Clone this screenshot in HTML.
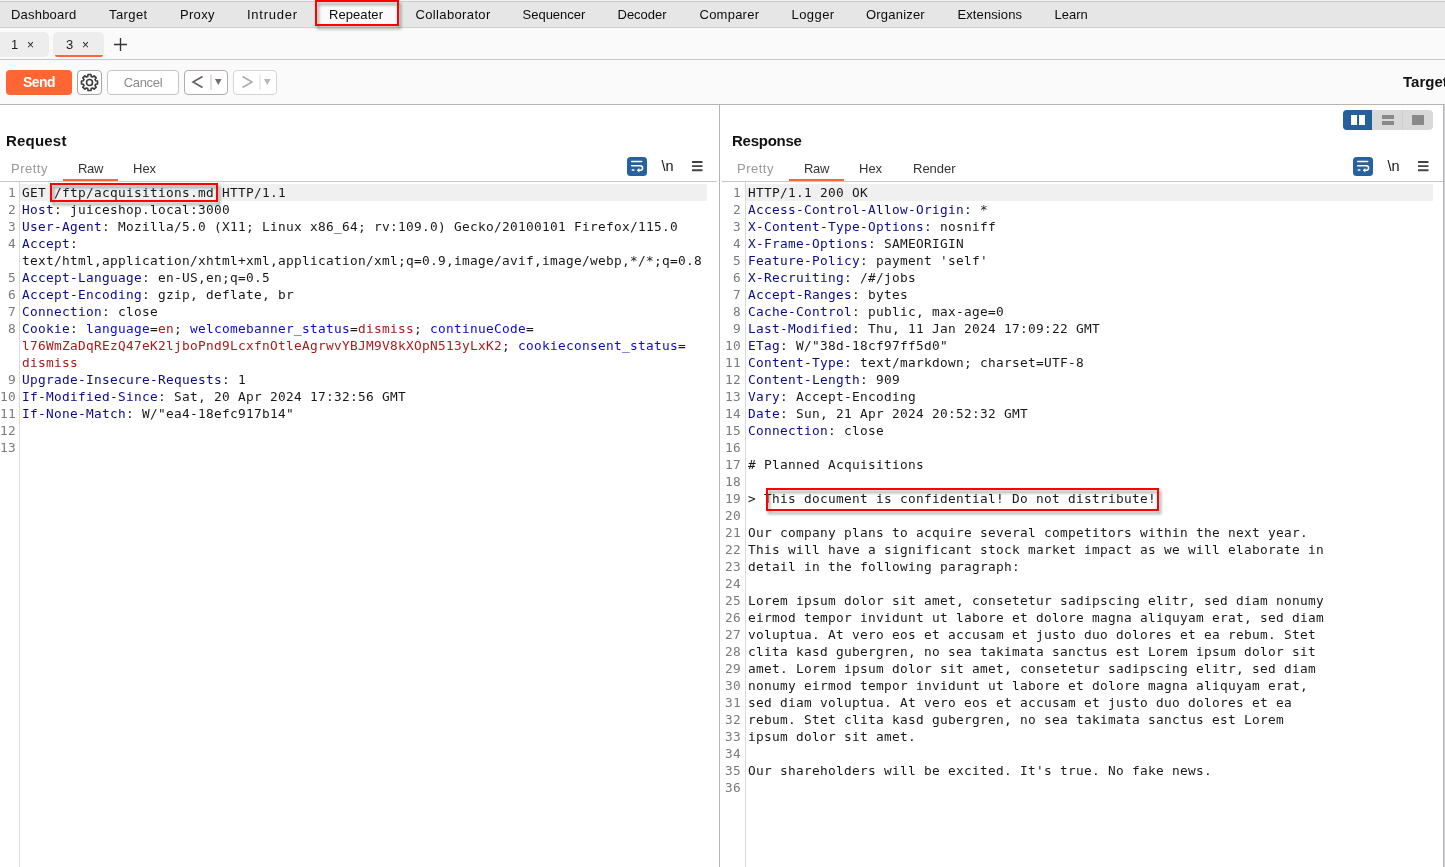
<!DOCTYPE html>
<html lang="en">
<head>
<meta charset="utf-8">
<title>Burp Suite - Repeater</title>
<style>
html,body{margin:0;padding:0;}
body{width:1445px;height:867px;overflow:hidden;background:#fff;position:relative;will-change:transform;font-family:"Liberation Sans","DejaVu Sans",sans-serif;font-size:13px;color:#222;}
.abs{position:absolute;}
#topbar{position:absolute;left:0;top:0;width:1445px;height:25px;background:#e6e6e6;border-top:2px solid #c8cccc;border-bottom:1px solid #cbd0d0;}
#topbar:before{content:"";position:absolute;left:0;top:-2px;width:1445px;height:1px;background:#f2f2f2;}
.nv{position:absolute;top:5px;height:16px;line-height:16px;font-size:13px;color:#0c0c0c;white-space:nowrap;}
#repbg{position:absolute;left:317px;top:0;width:80px;height:22px;background:#fafafa;}
#repbox{position:absolute;left:315px;top:0;width:80px;height:22px;border:2px solid #ff0000;filter:drop-shadow(2px 3px 1.8px rgba(60,80,80,.55));}
#tabrow{position:absolute;left:0;top:28px;width:1445px;height:31px;background:#fafafa;border-bottom:1px solid #c3c9c9;}
.rtab{position:absolute;top:4px;height:25px;background:#ededed;border-radius:5px;}
.rtab span{position:absolute;top:5px;line-height:16px;font-size:13px;color:#222;}
#toolbar{position:absolute;left:0;top:60px;width:1445px;height:44px;background:#fafafa;border-bottom:1px solid #b9b3b3;}
.btn{position:absolute;top:10px;height:23px;border:1px solid #c4c4c4;border-radius:4px;background:#fff;box-sizing:content-box;}
#send{left:6px;width:66px;height:25px;border:none;background:#ff6633;color:#fff;font-weight:bold;font-size:14px;letter-spacing:-0.5px;text-align:center;line-height:25px;}
#cancel{left:107px;width:70px;color:#8a8a8a;text-align:center;line-height:24px;font-size:13px;letter-spacing:-0.35px;}
.panelhead{position:absolute;top:132px;font-weight:bold;font-size:15px;line-height:18px;color:#111;}
.vtab{position:absolute;top:161px;font-size:13px;line-height:16px;color:#333;white-space:nowrap;}
.vtab.dim{color:#999;}
.uline{position:absolute;top:179px;height:2px;background:#ff6633;}
.hline{position:absolute;top:181px;height:1px;background:#c3c9c9;}
.editor{position:absolute;top:184px;font-family:"DejaVu Sans Mono","Liberation Mono",monospace;font-size:12.8px;letter-spacing:0.2955px;line-height:17px;color:#181818;}
.row{position:relative;height:17px;white-space:pre;}
.row .ln{position:absolute;left:0;top:0;text-align:right;color:#7a7a7a;}
.row .tx{position:absolute;top:0;height:17px;}
.row.first .tx{background:#f0f0f0;}
#req .ln{width:16px;} #req .tx{left:20px;padding-left:2px;}
#req .row.first .tx{width:685px;}
#resp .ln{width:21px;} #resp .tx{left:26px;padding-left:2px;}
#resp .row.first .tx{width:685px;}
.h{color:#0c0c86;} .n{color:#0c0ccf;} .v{color:#aa1c1c;}
.gut{position:absolute;top:182px;width:1px;height:685px;background:#d9d9d9;}
.redbox{position:absolute;border:2px solid #ff0000;filter:drop-shadow(2px 3px 1.8px rgba(60,80,80,.55));}
.nl{position:absolute;top:158px;font-size:14.5px;line-height:16px;color:#111;letter-spacing:-0.1px;}
.menu{position:absolute;top:161px;width:10.5px;height:11px;}
.wrapic{position:absolute;top:157px;}
</style>
</head>
<body>
<div id="topbar">
<div id="repbg"></div>
<span class="nv" style="left:11px;letter-spacing:0.2px">Dashboard</span>
<span class="nv" style="left:109px;letter-spacing:0.4px">Target</span>
<span class="nv" style="left:180px;letter-spacing:0.3px">Proxy</span>
<span class="nv" style="left:247px;letter-spacing:0.74px">Intruder</span>
<span class="nv" style="left:329px;letter-spacing:0.07px">Repeater</span>
<span class="nv" style="left:415.5px;letter-spacing:0.36px">Collaborator</span>
<span class="nv" style="left:522.5px;letter-spacing:0px">Sequencer</span>
<span class="nv" style="left:617.5px;letter-spacing:0px">Decoder</span>
<span class="nv" style="left:699.5px;letter-spacing:0.24px">Comparer</span>
<span class="nv" style="left:791.5px;letter-spacing:0.44px">Logger</span>
<span class="nv" style="left:866px;letter-spacing:0.2px">Organizer</span>
<span class="nv" style="left:957.5px;letter-spacing:0.1px">Extensions</span>
<span class="nv" style="left:1054.5px;letter-spacing:0px">Learn</span>
</div>
<div id="tabrow">
<div class="rtab" style="left:-5px;width:54px"><span style="left:16px">1</span><span style="left:32px;font-size:12px">×</span></div>
<div class="rtab" style="left:53px;width:51px"><span style="left:13px">3</span><span style="left:29px;font-size:12px">×</span><i class="abs" style="left:2px;right:1px;bottom:0;height:2px;background:#ff6633;border-radius:0 0 3px 3px"></i></div>
<svg class="abs" style="left:114px;top:10px" width="13" height="13" viewBox="0 0 13 13"><path d="M6.500 0v13M0 6.500h13" stroke="#333" stroke-width="1.350" fill="none"/></svg>
</div>
<div id="toolbar">
<div class="btn" id="send">Send</div>
<div class="btn" style="left:77px;width:23px;border-color:#aaa3a3"><svg class="abs" style="left:2px;top:1.500px" width="19" height="19" viewBox="0 0 24 24" fill="none" stroke="#3c3c3c" stroke-width="2.1" stroke-linejoin="round"><path d="M9.83 4.30 L10.15 1.87 L13.85 1.87 L14.17 4.30 L15.91 5.02 L17.86 3.53 L20.47 6.14 L18.98 8.09 L19.70 9.83 L22.13 10.15 L22.13 13.85 L19.70 14.17 L18.98 15.91 L20.47 17.86 L17.86 20.47 L15.91 18.98 L14.17 19.70 L13.85 22.13 L10.15 22.13 L9.83 19.70 L8.09 18.98 L6.14 20.47 L3.53 17.86 L5.02 15.91 L4.30 14.17 L1.87 13.85 L1.87 10.15 L4.30 9.83 L5.02 8.09 L3.53 6.14 L6.14 3.53 L8.09 5.02Z"/><circle cx="12" cy="12" r="3.800"/></svg></div>
<div class="btn" id="cancel">Cancel</div>
<div class="btn" style="left:184px;width:42px;border-color:#b5aaaa"><svg class="abs" style="left:0;top:0" width="42" height="23" viewBox="0 0 42 23"><path d="M17.500 5.500L8 11 17.500 16.500" stroke="#606060" stroke-width="1.600" fill="none"/><path d="M26 3.500v15.500" stroke="#d6d6d6" stroke-width="1.500"/><path d="M30 8h6.600l-3.300 6z" fill="#6e6e6e"/></svg></div>
<div class="btn" style="left:233px;width:42px;border-color:#d4d4d4"><svg class="abs" style="left:0;top:0" width="42" height="23" viewBox="0 0 42 23"><path d="M8.500 5.500L18 11 8.500 16.500" stroke="#ababab" stroke-width="1.600" fill="none"/><path d="M26 3.500v15.500" stroke="#e6e6e6" stroke-width="1.500"/><path d="M30 8h6.600l-3.300 6z" fill="#b8b8b8"/></svg></div>
<div class="abs" style="left:1403px;top:13px;font-weight:bold;font-size:15px;line-height:18px;color:#111;white-space:nowrap">Target: juiceshop.local</div>
</div>

<div class="abs" style="left:719px;top:105px;width:1px;height:762px;background:#b9b4b4"></div>
<div class="abs" style="left:1443px;top:105px;width:1px;height:762px;background:#b8b3b3"></div>
<div class="abs" style="left:1444px;top:105px;width:1px;height:762px;background:#d2d2d6"></div>

<!-- layout switcher -->
<div class="abs" style="left:1343px;top:110px;width:90px;height:20px;border-radius:4px;background:#d9d9d9;overflow:hidden">
<div class="abs" style="left:0;top:0;width:29px;height:20px;background:#255f9c"></div>
<div class="abs" style="left:8px;top:5px;width:6px;height:10px;background:#fff"></div>
<div class="abs" style="left:16px;top:5px;width:6px;height:10px;background:#fff"></div>
<div class="abs" style="left:59px;top:0;width:1px;height:20px;background:#cfcfcf"></div>
<div class="abs" style="left:39px;top:5px;width:12px;height:4px;background:#898989"></div>
<div class="abs" style="left:39px;top:10.500px;width:12px;height:4.500px;background:#898989"></div>
<div class="abs" style="left:69px;top:5px;width:12px;height:10px;background:#898989"></div>
</div>

<!-- Request panel -->
<div class="panelhead" style="left:6px;letter-spacing:0.2px">Request</div>
<div class="vtab dim" style="left:11px;letter-spacing:0.5px">Pretty</div>
<div class="vtab" style="left:78px;letter-spacing:-0.3px">Raw</div>
<div class="vtab" style="left:133px">Hex</div>
<div class="uline" style="left:63px;width:55px"></div>
<div class="hline" style="left:0;width:717px"></div>
<svg class="wrapic" style="left:627px" width="20" height="19" viewBox="0 0 20 19"><rect x="0" y="0" width="20" height="19" rx="3.500" ry="3.500" fill="#27629f"/><g fill="none" stroke="#fff" stroke-width="1.500" stroke-linecap="round" stroke-linejoin="round"><path d="M4.700 4.500h10"/><path d="M4.700 8.700h8.600a2.300 2.300 0 0 1 0 4.600h-2.300"/><path d="M4.700 13h2.700" stroke-linecap="butt"/></g><path d="M12.400 11l-2.600 2.300 2.600 2.300z" fill="#fff"/></svg>
<div class="nl" style="left:661.500px">\n</div>
<svg class="menu" style="left:692px" viewBox="0 0 10.500 11"><path d="M0 1h10.500M0 5.100h10.500M0 9.200h10.500" stroke="#444" stroke-width="1.900"/></svg>
<div class="gut" style="left:19px"></div>
<div class="editor" id="req" style="left:0;width:719px">
<div class="row first"><span class="ln">1</span><span class="tx">GET /ftp/acquisitions.md HTTP/1.1</span></div>
<div class="row"><span class="ln">2</span><span class="tx"><span class="h">Host</span>: juiceshop.local:3000</span></div>
<div class="row"><span class="ln">3</span><span class="tx"><span class="h">User-Agent</span>: Mozilla/5.0 (X11; Linux x86_64; rv:109.0) Gecko/20100101 Firefox/115.0</span></div>
<div class="row"><span class="ln">4</span><span class="tx"><span class="h">Accept</span>:</span></div>
<div class="row"><span class="ln"></span><span class="tx">text/html,application/xhtml+xml,application/xml;q=0.9,image/avif,image/webp,*/*;q=0.8</span></div>
<div class="row"><span class="ln">5</span><span class="tx"><span class="h">Accept-Language</span>: en-US,en;q=0.5</span></div>
<div class="row"><span class="ln">6</span><span class="tx"><span class="h">Accept-Encoding</span>: gzip, deflate, br</span></div>
<div class="row"><span class="ln">7</span><span class="tx"><span class="h">Connection</span>: close</span></div>
<div class="row"><span class="ln">8</span><span class="tx"><span class="h">Cookie</span>: <span class="n">language</span>=<span class="v">en</span>; <span class="n">welcomebanner_status</span>=<span class="v">dismiss</span>; <span class="n">continueCode</span>=</span></div>
<div class="row"><span class="ln"></span><span class="tx"><span class="v">l76WmZaDqREzQ47eK2ljboPnd9LcxfnOtleAgrwvYBJM9V8kXOpN513yLxK2</span>; <span class="n">cookieconsent_status</span>=</span></div>
<div class="row"><span class="ln"></span><span class="tx"><span class="v">dismiss</span></span></div>
<div class="row"><span class="ln">9</span><span class="tx"><span class="h">Upgrade-Insecure-Requests</span>: 1</span></div>
<div class="row"><span class="ln">10</span><span class="tx"><span class="h">If-Modified-Since</span>: Sat, 20 Apr 2024 17:32:56 GMT</span></div>
<div class="row"><span class="ln">11</span><span class="tx"><span class="h">If-None-Match</span>: W/"ea4-18efc917b14"</span></div>
<div class="row"><span class="ln">12</span><span class="tx"></span></div>
<div class="row"><span class="ln">13</span><span class="tx"></span></div>
</div>
<div class="redbox" style="left:50px;top:183px;width:164px;height:15px"></div>

<!-- Response panel -->
<div class="panelhead" style="left:732px;letter-spacing:-0.25px">Response</div>
<div class="vtab dim" style="left:737px;letter-spacing:0.5px">Pretty</div>
<div class="vtab" style="left:804px;letter-spacing:-0.3px">Raw</div>
<div class="vtab" style="left:859px">Hex</div>
<div class="vtab" style="left:913px">Render</div>
<div class="uline" style="left:789px;width:55px"></div>
<div class="hline" style="left:722px;width:721px"></div>
<svg class="wrapic" style="left:1353px" width="20" height="19" viewBox="0 0 20 19"><rect x="0" y="0" width="20" height="19" rx="3.500" ry="3.500" fill="#27629f"/><g fill="none" stroke="#fff" stroke-width="1.500" stroke-linecap="round" stroke-linejoin="round"><path d="M4.700 4.500h10"/><path d="M4.700 8.700h8.600a2.300 2.300 0 0 1 0 4.600h-2.300"/><path d="M4.700 13h2.700" stroke-linecap="butt"/></g><path d="M12.400 11l-2.600 2.300 2.600 2.300z" fill="#fff"/></svg>
<div class="nl" style="left:1387.500px">\n</div>
<svg class="menu" style="left:1418px" viewBox="0 0 10.500 11"><path d="M0 1h10.500M0 5.100h10.500M0 9.200h10.500" stroke="#444" stroke-width="1.900"/></svg>
<div class="gut" style="left:745px"></div>
<div class="editor" id="resp" style="left:720px;width:723px">
<div class="row first"><span class="ln">1</span><span class="tx">HTTP/1.1 200 OK</span></div>
<div class="row"><span class="ln">2</span><span class="tx"><span class="h">Access-Control-Allow-Origin</span>: *</span></div>
<div class="row"><span class="ln">3</span><span class="tx"><span class="h">X-Content-Type-Options</span>: nosniff</span></div>
<div class="row"><span class="ln">4</span><span class="tx"><span class="h">X-Frame-Options</span>: SAMEORIGIN</span></div>
<div class="row"><span class="ln">5</span><span class="tx"><span class="h">Feature-Policy</span>: payment 'self'</span></div>
<div class="row"><span class="ln">6</span><span class="tx"><span class="h">X-Recruiting</span>: /#/jobs</span></div>
<div class="row"><span class="ln">7</span><span class="tx"><span class="h">Accept-Ranges</span>: bytes</span></div>
<div class="row"><span class="ln">8</span><span class="tx"><span class="h">Cache-Control</span>: public, max-age=0</span></div>
<div class="row"><span class="ln">9</span><span class="tx"><span class="h">Last-Modified</span>: Thu, 11 Jan 2024 17:09:22 GMT</span></div>
<div class="row"><span class="ln">10</span><span class="tx"><span class="h">ETag</span>: W/"38d-18cf97ff5d0"</span></div>
<div class="row"><span class="ln">11</span><span class="tx"><span class="h">Content-Type</span>: text/markdown; charset=UTF-8</span></div>
<div class="row"><span class="ln">12</span><span class="tx"><span class="h">Content-Length</span>: 909</span></div>
<div class="row"><span class="ln">13</span><span class="tx"><span class="h">Vary</span>: Accept-Encoding</span></div>
<div class="row"><span class="ln">14</span><span class="tx"><span class="h">Date</span>: Sun, 21 Apr 2024 20:52:32 GMT</span></div>
<div class="row"><span class="ln">15</span><span class="tx"><span class="h">Connection</span>: close</span></div>
<div class="row"><span class="ln">16</span><span class="tx"></span></div>
<div class="row"><span class="ln">17</span><span class="tx"># Planned Acquisitions</span></div>
<div class="row"><span class="ln">18</span><span class="tx"></span></div>
<div class="row"><span class="ln">19</span><span class="tx">&gt; This document is confidential! Do not distribute!</span></div>
<div class="row"><span class="ln">20</span><span class="tx"></span></div>
<div class="row"><span class="ln">21</span><span class="tx">Our company plans to acquire several competitors within the next year.</span></div>
<div class="row"><span class="ln">22</span><span class="tx">This will have a significant stock market impact as we will elaborate in</span></div>
<div class="row"><span class="ln">23</span><span class="tx">detail in the following paragraph:</span></div>
<div class="row"><span class="ln">24</span><span class="tx"></span></div>
<div class="row"><span class="ln">25</span><span class="tx">Lorem ipsum dolor sit amet, consetetur sadipscing elitr, sed diam nonumy</span></div>
<div class="row"><span class="ln">26</span><span class="tx">eirmod tempor invidunt ut labore et dolore magna aliquyam erat, sed diam</span></div>
<div class="row"><span class="ln">27</span><span class="tx">voluptua. At vero eos et accusam et justo duo dolores et ea rebum. Stet</span></div>
<div class="row"><span class="ln">28</span><span class="tx">clita kasd gubergren, no sea takimata sanctus est Lorem ipsum dolor sit</span></div>
<div class="row"><span class="ln">29</span><span class="tx">amet. Lorem ipsum dolor sit amet, consetetur sadipscing elitr, sed diam</span></div>
<div class="row"><span class="ln">30</span><span class="tx">nonumy eirmod tempor invidunt ut labore et dolore magna aliquyam erat,</span></div>
<div class="row"><span class="ln">31</span><span class="tx">sed diam voluptua. At vero eos et accusam et justo duo dolores et ea</span></div>
<div class="row"><span class="ln">32</span><span class="tx">rebum. Stet clita kasd gubergren, no sea takimata sanctus est Lorem</span></div>
<div class="row"><span class="ln">33</span><span class="tx">ipsum dolor sit amet.</span></div>
<div class="row"><span class="ln">34</span><span class="tx"></span></div>
<div class="row"><span class="ln">35</span><span class="tx">Our shareholders will be excited. It's true. No fake news.</span></div>
<div class="row"><span class="ln">36</span><span class="tx"></span></div>
</div>
<div class="redbox" style="left:766px;top:488px;width:389px;height:19px"></div>
<div id="repbox"></div>
</body>
</html>
